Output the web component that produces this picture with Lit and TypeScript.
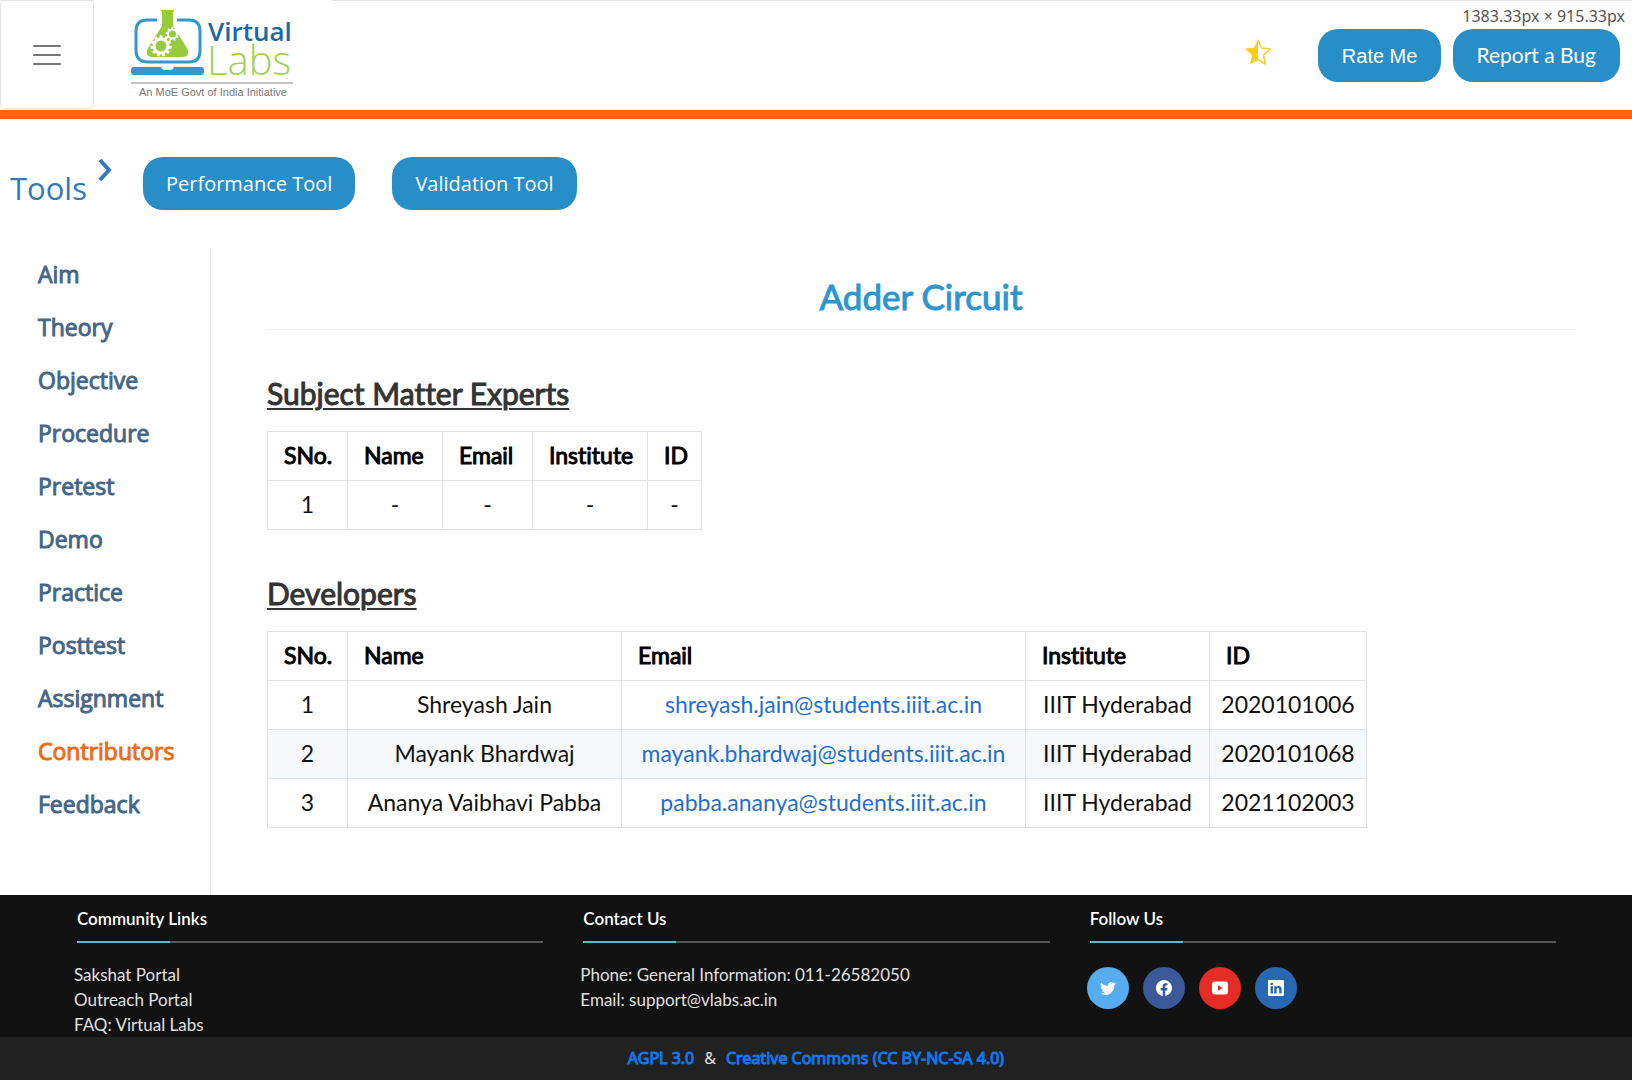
import { LitElement, html, svg, css } from "lit";
import { customElement, property } from "lit/decorators.js";
import { classMap } from "lit/directives/class-map.js";

const SECTIONS = [
  "Aim", "Theory", "Objective", "Procedure", "Pretest", "Demo",
  "Practice", "Posttest", "Assignment", "Contributors", "Feedback",
];

const COLUMNS = ["SNo.", "Name", "Email", "Institute", "ID"];

const EXPERTS = [["1", "-", "-", "-", "-"]];

const DEVELOPERS = [
  ["1", "Shreyash Jain", "shreyash.jain@students.iiit.ac.in", "IIIT Hyderabad", "2020101006"],
  ["2", "Mayank Bhardwaj", "mayank.bhardwaj@students.iiit.ac.in", "IIIT Hyderabad", "2020101068"],
  ["3", "Ananya Vaibhavi Pabba", "pabba.ananya@students.iiit.ac.in", "IIIT Hyderabad", "2021102003"],
];

const SOCIAL = [
  { name: "Twitter", cls: "twitter", path: "M5.026 15c6.038 0 9.341-5.003 9.341-9.334 0-.14 0-.282-.006-.422A6.685 6.685 0 0 0 16 3.542a6.658 6.658 0 0 1-1.889.518 3.301 3.301 0 0 0 1.447-1.817 6.533 6.533 0 0 1-2.087.793A3.286 3.286 0 0 0 7.875 6.03a9.325 9.325 0 0 1-6.767-3.429 3.289 3.289 0 0 0 1.018 4.382A3.323 3.323 0 0 1 .64 6.575v.045a3.288 3.288 0 0 0 2.632 3.218 3.203 3.203 0 0 1-.865.115 3.23 3.23 0 0 1-.614-.057 3.283 3.283 0 0 0 3.067 2.277A6.588 6.588 0 0 1 .78 13.58a6.32 6.32 0 0 1-.78-.045A9.344 9.344 0 0 0 5.026 15z" },
  { name: "Facebook", cls: "facebook", path: "M16 8.049c0-4.446-3.582-8.05-8-8.05C3.58 0-.002 3.603-.002 8.05c0 4.017 2.926 7.347 6.75 7.951v-5.625h-2.03V8.05H6.75V6.275c0-2.017 1.195-3.131 3.022-3.131.876 0 1.791.157 1.791.157v1.98h-1.009c-.993 0-1.303.621-1.303 1.258v1.51h2.218l-.354 2.326H9.25V16c3.824-.604 6.75-3.934 6.75-7.951z" },
  { name: "YouTube", cls: "youtube", path: "M3 1.500h10a3 3 0 0 1 3 3v7a3 3 0 0 1-3 3H3a3 3 0 0 1-3-3v-7a3 3 0 0 1 3-3zM6 5.300v5.400L10.700 8z" },
  { name: "LinkedIn", cls: "linkedin", path: "M0 1.146C0 .513.526 0 1.175 0h13.650C15.474 0 16 .513 16 1.146v13.708c0 .633-.526 1.146-1.175 1.146H1.175C.526 16 0 15.487 0 14.854V1.146zm4.943 12.248V6.169H2.542v7.225h2.401zm-1.200-8.212c.837 0 1.358-.554 1.358-1.248-.015-.709-.520-1.248-1.342-1.248-.822 0-1.359.540-1.359 1.248 0 .694.521 1.248 1.327 1.248h.016zm4.908 8.212V9.359c0-.216.016-.432.080-.586.173-.431.568-.878 1.232-.878.869 0 1.216.662 1.216 1.634v3.865h2.401V9.250c0-2.220-1.184-3.252-2.764-3.252-1.274 0-1.845.700-2.165 1.193v.025h-.016l.016-.025V6.169h-2.400c.030.678 0 7.225 0 7.225h2.400z" },
];

const gear = (cx: number, cy: number, r: number, hole: number, teeth: number) => svg`
  <circle cx=${cx} cy=${cy} r=${(r + hole) / 2} fill="none" stroke="#fff" stroke-width=${r - hole} />
  ${Array.from({ length: teeth }, (_, i) => svg`
    <rect x=${cx - r / 6} y=${cy - r - r / 4} width=${r / 3} height=${r / 2} fill="#fff"
      transform="rotate(${(360 / teeth) * i} ${cx} ${cy})" />`)}`;

@customElement("vl-logo")
export class VlLogo extends LitElement {
  static styles = css`
    :host { display: block; }
    .logo { display: block; width: 164px; height: 90px; }
    .virtual { font: 600 26px "Open Sans", sans-serif; fill: #1b6a9c; }
    .labs { font: 300 40px "Open Sans", sans-serif; fill: #a3cf52; }
    .motto { font: 400 11px "Liberation Sans", sans-serif; fill: #777; text-anchor: middle; }
  `;
  render() {
    return html`
      <svg class="logo" viewBox="131 8 164 90" role="img" aria-label="Virtual Labs">
        <path d="M157 20h-10q-11 0-11 11v19q0 12 12 12h41q11 0 11-11V31q0-11-11-11h-12" fill="none" stroke="#3299cf" stroke-width="3" />
        <path d="M161 10h13v1.500h-1v14.500l14 22q4 9-5 9h-29q-9 0-5-9l14-22V11.500h-1z" fill="#97ca3d" />
        ${gear(161, 46, 8.5, 5.5, 11)}
        ${gear(172.500, 34, 5.500, 3.500, 9)}
        <path d="M134 67h27q1 3 4 3h5q3 0 4-3h27q3 0 3 3v2q0 3-3 3h-67q-3 0-3-3v-2q0-3 3-3z" fill="#3299cf" />
        <text class="virtual" x="208" y="41">Virtual</text>
        <text class="labs" x="207" y="75">Labs</text>
        <path d="M131 83h162" stroke="#8b8b8b" stroke-width="1" />
        <text class="motto" x="213" y="96">An MoE Govt of India Initiative</text>
      </svg>`;
  }
}

@customElement("people-table")
export class PeopleTable extends LitElement {
  @property() heading = "";
  @property({ attribute: false }) rows: string[][] = [];
  @property({ type: Boolean }) compact = false;

  static styles = css`
    :host { display: block; }
    .heading {
      margin: 0 0 20px; color: #333; font-size: 30px; line-height: 36px; font-weight: 400;
      -webkit-text-stroke: 1px #333; text-decoration: underline 2px; text-underline-offset: 3px;
    }
    .table { border-collapse: collapse; table-layout: fixed; width: 1099px; color: #111; }
    .compact { width: 434px; }
    .c0 { width: 80px; } .c1 { width: 274px; } .c2 { width: 404px; } .c3 { width: 184px; } .c4 { width: 157px; }
    .compact .c1 { width: 95px; } .compact .c2 { width: 90px; } .compact .c3 { width: 115px; } .compact .c4 { width: 54px; }
    .cell { box-sizing: border-box; height: 49px; padding: 0 0 2px; border: 1px solid #dfe2e5; text-align: center; font-weight: 400; white-space: nowrap; }
    .head { padding-left: 16px; text-align: left; color: #000; -webkit-text-stroke: 1px #000; }
    .row:nth-child(even) { background: #f6f8fa; }
    .mail { color: #1f6fd0; text-decoration: none; }
  `;
  render() {
    return html`
      <h2 class="heading">${this.heading}</h2>
      <table class=${classMap({ table: true, compact: this.compact })} aria-label=${this.heading}>
        <colgroup>${COLUMNS.map((_, i) => html`<col class="c${i}" />`)}</colgroup>
        <thead><tr>${COLUMNS.map((c) => html`<th class="cell head" scope="col">${c}</th>`)}</tr></thead>
        <tbody>${this.rows.map((r) => html`<tr class="row">${r.map((v) => html`<td class="cell">${
          v.includes("@") ? html`<a class="mail" href="mailto:${v}">${v}</a>` : v}</td>`)}</tr>`)}</tbody>
      </table>`;
  }
}

@customElement("site-footer")
export class SiteFooter extends LitElement {
  static styles = css`
    :host { display: block; color: #e0e0e0; background: #111; font-size: 17px; line-height: 25px; }
    .columns { display: grid; grid-template-columns: repeat(3, 1fr); gap: 40px; padding: 11px 76px 0 77px; height: 131px; }
    .title { margin: 0 0 19px; padding-bottom: 10px; color: #fff; font-size: 17px; line-height: 25px; font-weight: 600;
      border-bottom: 2px solid; border-image: linear-gradient(90deg, #5cb8c4 20%, #555 20%) 1; }
    .list { margin: 0 0 0 -3px; padding: 0; list-style: none; }
    .link { color: inherit; text-decoration: none; }
    .social { display: flex; gap: 14px; margin-left: -3px; padding-top: 5px; }
    .badge { display: flex; align-items: center; justify-content: center; width: 42px; height: 42px; border-radius: 50%; }
    .icon { width: 16px; height: 16px; fill: #fff; fill-rule: evenodd; }
    .twitter { background: #55acee; } .facebook { background: #3b5998; }
    .youtube { background: #e52d27; } .linkedin { background: #2867b2; }
    .license { display: flex; justify-content: center; gap: 10px; padding: 9px 0; background: #212121; font-family: "Noto Sans", sans-serif; font-size: 16px; }
    .blue { color: #0f78f0; text-decoration: none; -webkit-text-stroke: 1px #0f78f0; }
  `;
  render() {
    return html`
      <div class="columns">
        <section>
          <h3 class="title">Community Links</h3>
          <ul class="list">
            ${["Sakshat Portal", "Outreach Portal", "FAQ: Virtual Labs"].map((t) => html`<li><a class="link" href="#">${t}</a></li>`)}
          </ul>
        </section>
        <section>
          <h3 class="title">Contact Us</h3>
          <ul class="list">
            <li>Phone: General Information: 011-26582050</li>
            <li>Email: <a class="link" href="mailto:support@vlabs.ac.in">support@vlabs.ac.in</a></li>
          </ul>
        </section>
        <section>
          <h3 class="title">Follow Us</h3>
          <div class="social">
            ${SOCIAL.map((s) => html`<a class="badge ${s.cls}" href="#" aria-label=${s.name}>
              <svg class="icon" viewBox="0 0 16 16"><path d=${s.path} /></svg></a>`)}
          </div>
        </section>
      </div>
      <div class="license"><a class="blue" href="#">AGPL 3.0</a><span>&amp;</span><a class="blue" href="#">Creative Commons (CC BY-NC-SA 4.0)</a></div>`;
  }
}

@customElement("app-root")
export class AppRoot extends LitElement {
  static styles = css`
    :host {
      display: flex; flex-direction: column; min-height: 100vh; position: relative;
      background: #fff; color: #111; font-family: Lato, sans-serif; font-size: 23px; line-height: 28px;
      font-variant-ligatures: none;
    }
    .header { display: flex; box-sizing: border-box; height: 119px; border-top: 1px solid #e5e5e5; border-bottom: 9px solid #ff6600; padding-right: 12px; }
    .menu { width: 94px; height: 109px; margin-top: -1px; padding: 0; border: 1px solid #e3e3e3; border-radius: 5px; background: #fff; }
    .bars { display: block; width: 28px; height: 22px; margin: 0 auto; fill: none; stroke: #777; stroke-width: 2; stroke-linecap: round; }
    .brand { padding: 8px 37px 0; background: #fff; margin-top: -1px; }
    .actions { display: flex; margin-left: auto; padding-top: 28px; align-items: flex-start; gap: 12px; }
    .star { width: 28px; height: 28px; margin: 9px 34px 0 0; }
    .button {
      box-sizing: border-box; height: 53px; padding: 0 23px; border: 0; border-radius: 20px;
      background: #288ec8; color: #fff; font: 400 20px/28px "Open Sans", sans-serif;
      display: flex; align-items: center; justify-content: center; text-decoration: none;
    }
    .rate { padding: 0 24px; font-family: "Liberation Sans", sans-serif; }
    .report { padding: 0 24px 2px 23px; font-family: Lato, sans-serif; font-size: 21px; }
    .size { position: absolute; top: 1px; right: 0; padding: 4px 7px 0 8px; background: #fff; color: #555; font: 400 16px/22px "Noto Sans", sans-serif; }
    .tools { display: flex; align-items: flex-start; padding: 38px 10px; }
    .tools-title { margin: 0; padding-top: 11px; color: #337ab7; font: 400 31px/40px "Open Sans", sans-serif; }
    .chevron { width: 16px; height: 26px; margin: 0 30px 0 10px; fill: none; stroke: #337ab7; stroke-width: 4; }
    .tool + .tool { margin-left: 37px; }
    .body { display: flex; flex: 1; }
    .nav { box-sizing: border-box; width: 211px; border-right: 1px solid #e5e5e5; padding-left: 38px; }
    .item { display: block; padding: 10px 0; color: #446688; font: 400 23px/33px "Open Sans", sans-serif; text-decoration: none; -webkit-text-stroke: 1px currentColor; }
    .active { color: #f26a12; }
    .content { flex: 1; padding: 26px 57px 0 56px; display: flex; flex-direction: column; }
    .title { margin: 0 0 45px; padding-bottom: 11px; border-bottom: 1px solid #eee; text-align: center; color: #2d96cf; font-size: 35px; line-height: 44px; font-weight: 400; -webkit-text-stroke: 1px #2d96cf; }
    .developers { margin-top: 45px; }
  `;
  render() {
    return html`
      <header class="header">
        <button class="menu" aria-label="Menu">
          <svg class="bars" viewBox="0 0 28 22"><path d="M1 2h26M1 11h26M1 20h26" /></svg>
        </button>
        <div class="brand"><vl-logo></vl-logo></div>
        <div class="actions">
          <svg class="star" viewBox="0 0 28 28" aria-hidden="true">
            <path d="M14 2l3.500 8 9 1-7 6 2 9-7.500-4.500" fill="none" stroke="#f8ce2a" stroke-width="1.500" stroke-linejoin="round" />
            <path d="M14 1L10 9.500 1 10.500l7 6.500-2 9.500L14 22z" fill="#fdcc1c" />
          </svg>
          <button class="button rate">Rate Me</button>
          <a class="button report" href="#">Report a Bug</a>
        </div>
        <div class="size">1383.33px × 915.33px</div>
      </header>
      <div class="tools">
        <h2 class="tools-title">Tools</h2>
        <svg class="chevron" viewBox="0 0 16 26" aria-hidden="true"><path d="M3 3l9 10-9 10" /></svg>
        <a class="button tool" href="#">Performance Tool</a>
        <a class="button tool" href="#">Validation Tool</a>
      </div>
      <div class="body">
        <nav class="nav">
          ${SECTIONS.map((s) => html`<a href="#" class=${classMap({ item: true, active: s === "Contributors" })}>${s}</a>`)}
        </nav>
        <main class="content">
          <h1 class="title">Adder Circuit</h1>
          <people-table heading="Subject Matter Experts" .rows=${EXPERTS} compact></people-table>
          <people-table class="developers" heading="Developers" .rows=${DEVELOPERS}></people-table>
        </main>
      </div>
      <site-footer></site-footer>`;
  }
}
